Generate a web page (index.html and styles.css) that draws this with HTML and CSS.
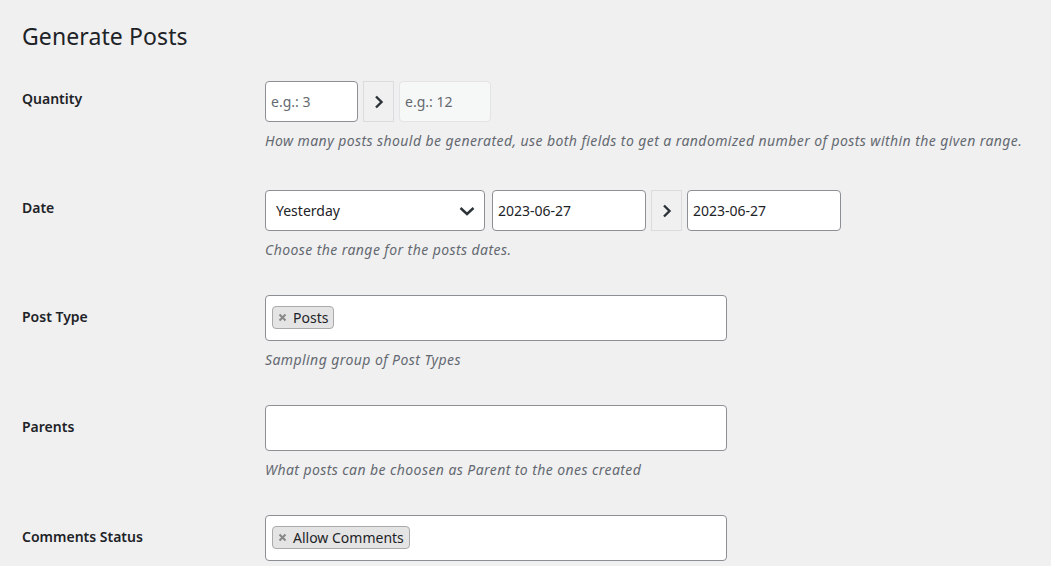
FILE: index.html
```html
<!DOCTYPE html>
<html lang="en">
<head>
<meta charset="utf-8">
<title>Generate Posts</title>
<link rel="stylesheet" href="styles.css">
</head>
<body>
<div class="wrap">
  <h1 class="title">Generate Posts</h1>

  <div class="row">
    <div class="label">Quantity</div>
    <div class="field">
      <div class="inline">
        <input class="text w-qty" type="text" placeholder="e.g.: 3">
        <span class="arrow"><svg width="12" height="16" viewBox="0 0 12 16"><path d="M3 2.5 L8.5 8 L3 13.5" fill="none" stroke="#2c3338" stroke-width="2.4"/></svg></span>
        <input class="text w-qty2" type="text" placeholder="e.g.: 12" disabled>
      </div>
      <p class="desc">How many posts should be generated, use both fields to get a randomized number of posts within the given range.</p>
    </div>
  </div>

  <div class="row">
    <div class="label">Date</div>
    <div class="field">
      <div class="inline">
        <div class="select">
          <span>Yesterday</span>
          <svg width="18" height="12" viewBox="0 0 18 12"><path d="M2.5 3 L9 9 L15.5 3" fill="none" stroke="#2c3338" stroke-width="2.4"/></svg>
        </div>
        <input class="text w-date" type="text" value="2023-06-27">
        <span class="arrow"><svg width="12" height="16" viewBox="0 0 12 16"><path d="M3 2.5 L8.5 8 L3 13.5" fill="none" stroke="#2c3338" stroke-width="2.4"/></svg></span>
        <input class="text w-date" type="text" value="2023-06-27">
      </div>
      <p class="desc">Choose the range for the posts dates.</p>
    </div>
  </div>

  <div class="row">
    <div class="label">Post Type</div>
    <div class="field field-s2">
      <div class="s2"><span class="tag"><svg class="x" width="9" height="9" viewBox="0 0 9 9"><path d="M1.5 1.5 L7.5 7.5 M7.5 1.5 L1.5 7.5" stroke="#888" stroke-width="2"/></svg>Posts</span></div>
      <p class="desc">Sampling group of Post Types</p>
    </div>
  </div>

  <div class="row">
    <div class="label">Parents</div>
    <div class="field field-s2">
      <div class="s2"></div>
      <p class="desc">What posts can be choosen as Parent to the ones created</p>
    </div>
  </div>

  <div class="row">
    <div class="label">Comments Status</div>
    <div class="field field-s2">
      <div class="s2"><span class="tag"><svg class="x" width="9" height="9" viewBox="0 0 9 9"><path d="M1.5 1.5 L7.5 7.5 M7.5 1.5 L1.5 7.5" stroke="#888" stroke-width="2"/></svg>Allow Comments</span></div>
    </div>
  </div>
</div>
</body>
</html>
```

FILE: styles.css
```css
html, body {
  margin: 0;
  padding: 0;
  background: #f0f0f1;
  color: #1d2327;
  font-family: "Noto Sans", "Open Sans", sans-serif;
  font-size: 14px;
  overflow: hidden;
}

.wrap {
  padding: 21px 0 0 22px;
}

.title {
  margin: 0;
  font-size: 23px;
  font-weight: 400;
  line-height: 30px;
  height: 45px;
  letter-spacing: 0.1px;
}

.row {
  display: grid;
  grid-template-columns: 243px 1fr;
}

.label {
  padding-top: 23px;
  font-weight: 600;
  line-height: 20px;
}

.field {
  padding: 15px 0 24px;
}

.field-s2 {
  padding-top: 11px;
}

.inline {
  display: flex;
  align-items: flex-start;
  gap: 5px;
}

.text {
  box-sizing: border-box;
  height: 41px;
  margin: 0;
  padding: 0 5px;
  border: 1px solid #8c8f94;
  border-radius: 4px;
  background: #fff;
  color: #1d2327;
  font-family: inherit;
  font-size: 14px;
  outline: none;
}

.text::placeholder {
  color: #646970;
  opacity: 1;
}

.text:disabled {
  background: #f6f7f7;
  border-color: #e4e4e6;
}

.w-qty { width: 93px; }
.w-qty2 { width: 92px; }
.w-date { width: 154px; }

.arrow {
  box-sizing: border-box;
  width: 31px;
  height: 41px;
  display: flex;
  align-items: center;
  justify-content: center;
  background: #f0f0f1;
  border: 1px solid #dcdcde;
}

.select {
  box-sizing: border-box;
  width: 220px;
  height: 41px;
  margin-right: 2px;
  padding: 0 8px 0 10px;
  display: flex;
  align-items: center;
  justify-content: space-between;
  background: #fff;
  border: 1px solid #8c8f94;
  border-radius: 4px;
}

.desc {
  margin: 9px 0 0;
  line-height: 20px;
  font-style: italic;
  color: #646970;
  white-space: nowrap;
  letter-spacing: 0.42px;
}

.s2 {
  box-sizing: border-box;
  width: 462px;
  height: 46px;
  padding: 10px 6px 0;
  background: #fff;
  border: 1px solid #8c8f94;
  border-radius: 4px;
}

.tag {
  display: inline-flex;
  align-items: center;
  box-sizing: border-box;
  height: 23px;
  padding: 0 5px 0 5px;
  background: #e4e4e4;
  border: 1px solid #aaa;
  border-radius: 4px;
  line-height: 20px;
  color: #1d2327;
}

.x {
  margin-right: 6px;
}
```
